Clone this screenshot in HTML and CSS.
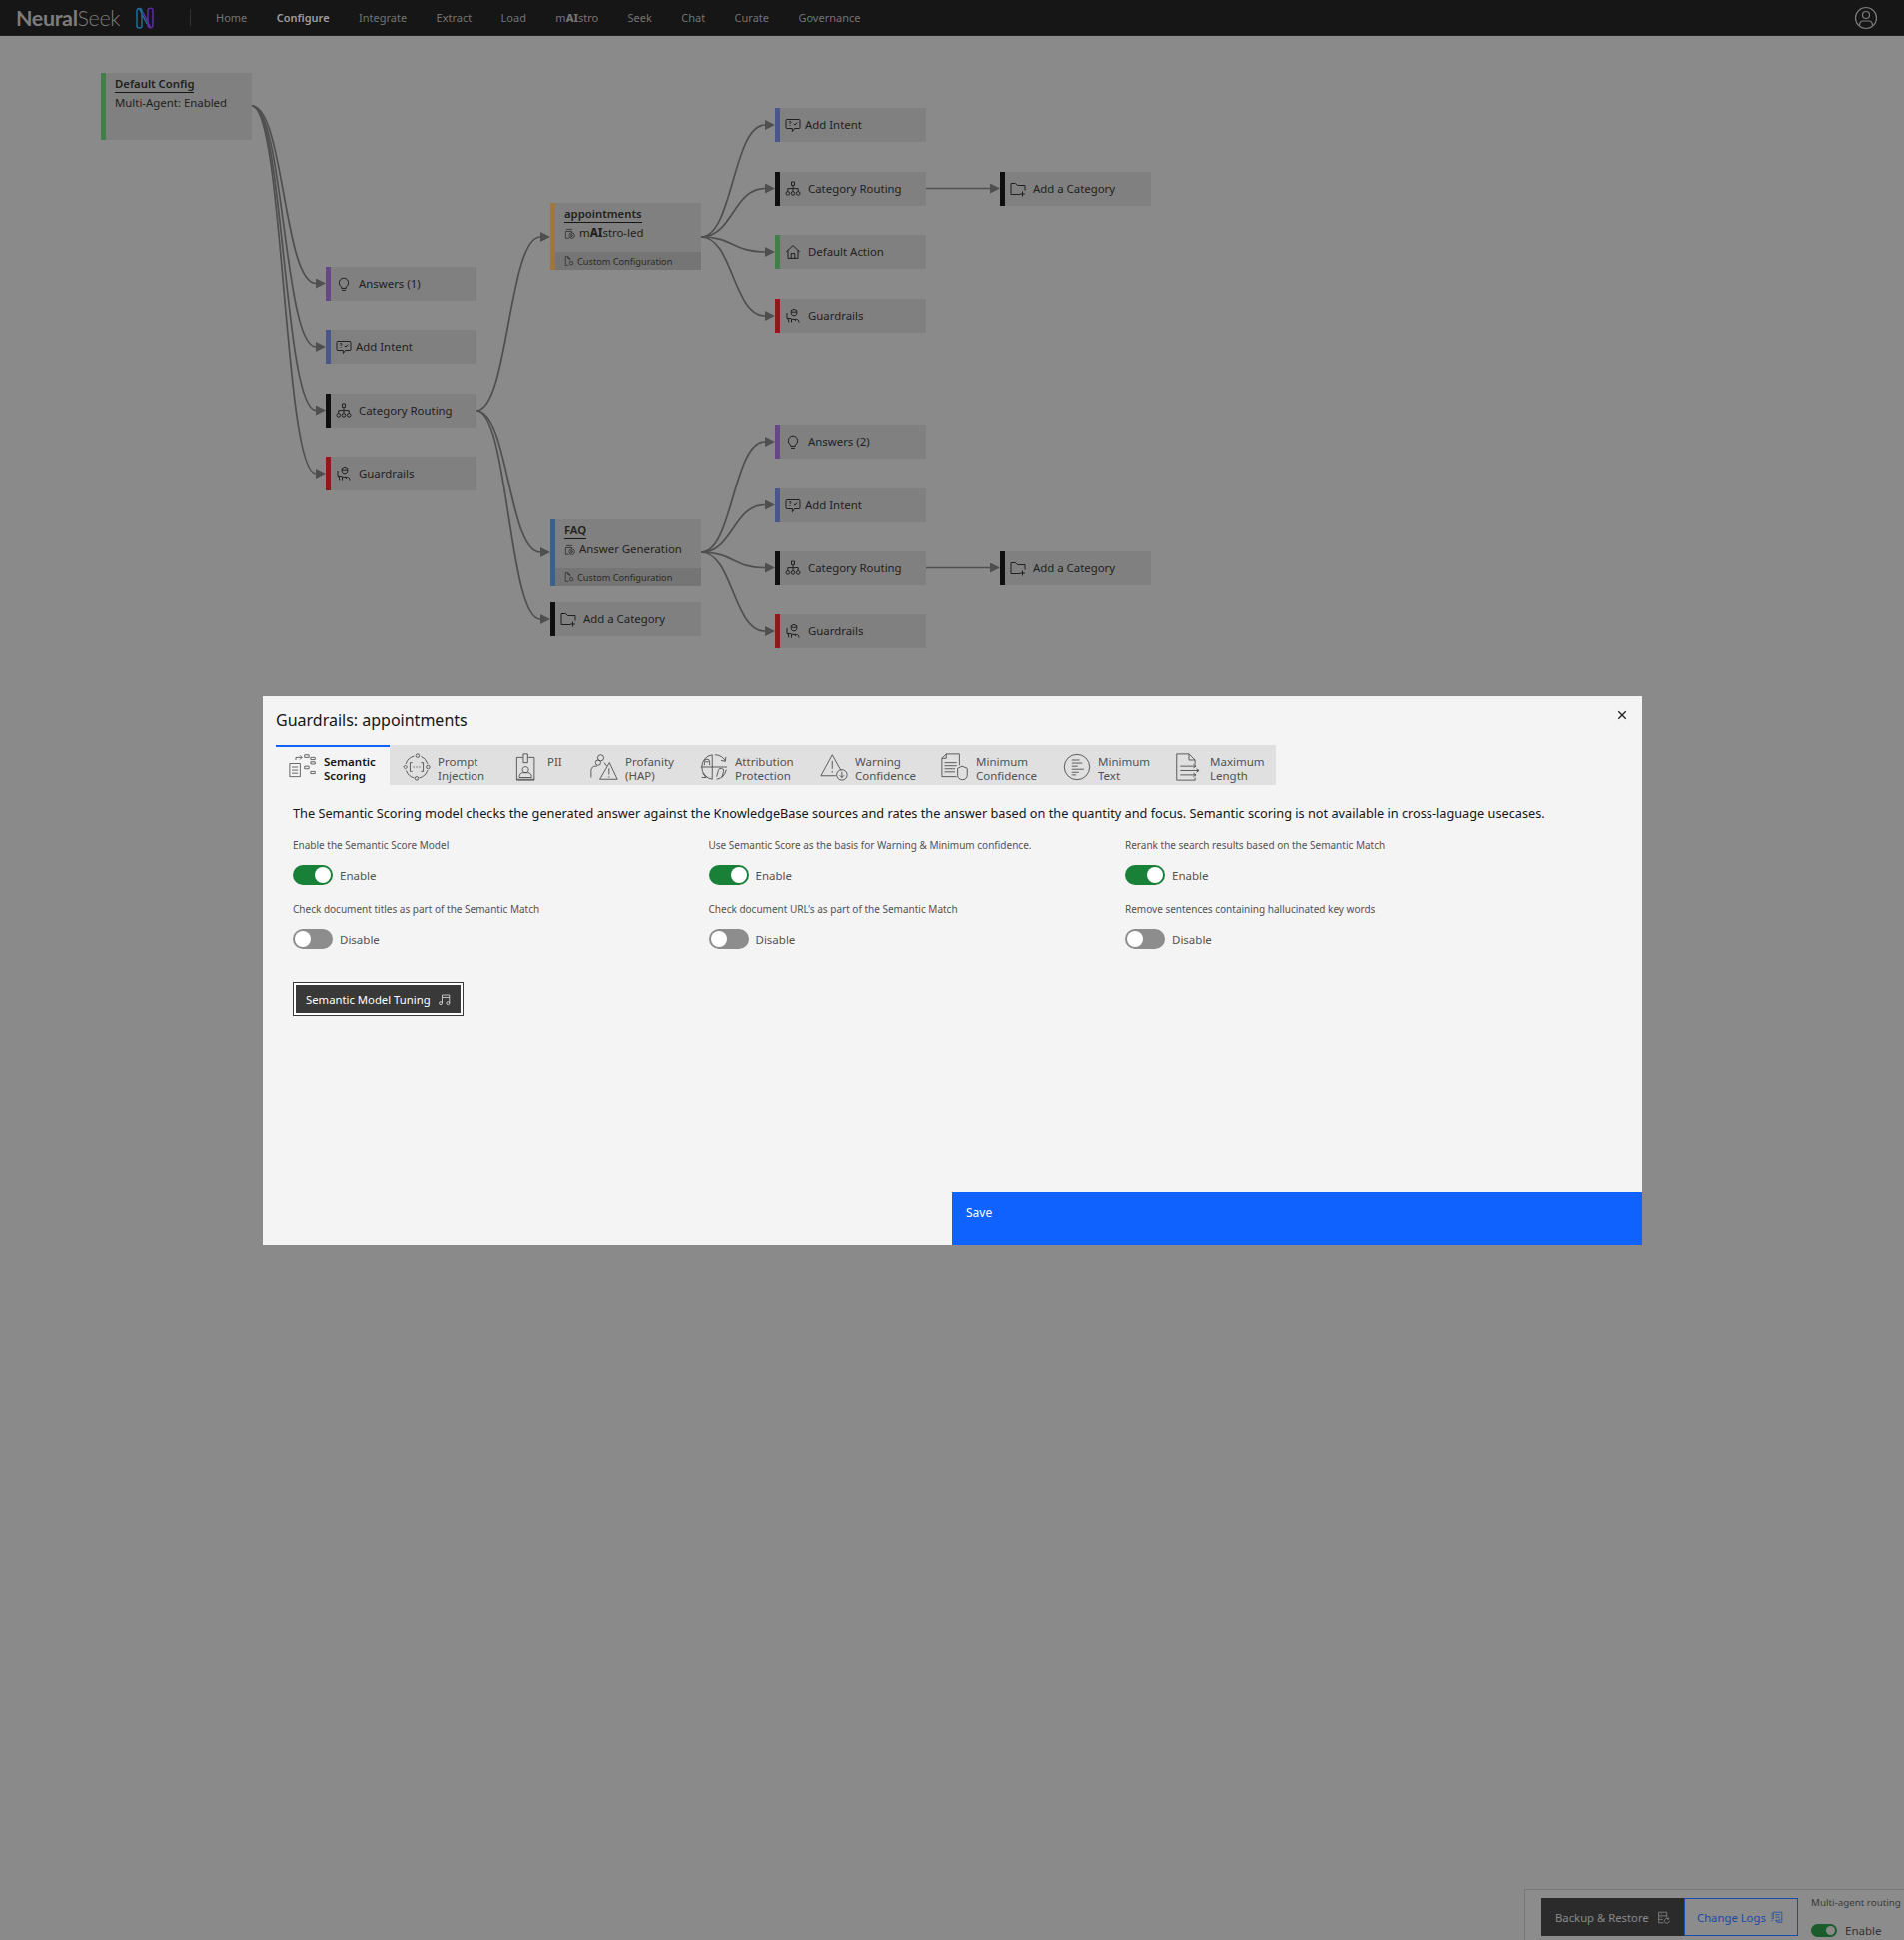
FILE: index.html
```html
<!DOCTYPE html>
<html lang="en">
<head>
    <meta charset="UTF-8">
    <meta name="viewport" content="width=device-width, initial-scale=1.0">
    <title>NeuralSeek - Configure</title>
    <link rel="stylesheet" href="styles.css">
</head>
<body>
    <svg class="sprites" width="0" height="0">
        <symbol id="i-bulb" viewBox="0 0 16 16"><path d="M5.600 11.200C4.200 10 3.400 8.600 3.400 6.800a4.600 4.600 0 0 1 9.200 0c0 1.800-.8 3.200-2.200 4.400v1.200H5.600zM6 14.400h4"/></symbol>
        <symbol id="i-intent" viewBox="0 0 16 16"><path d="M2 2.500h12a1 1 0 0 1 1 1v7a1 1 0 0 1-1 1H9.500L7.400 14.600v-3.100H2a1 1 0 0 1-1-1v-7a1 1 0 0 1 1-1z"/><path d="M4 5.200c.3-1 2-1 2 .1 0 .7-1 .8-1 1.600M5 8.200v.8M8.800 6.800l1.200 1.300 2.200-2.600"/></symbol>
        <symbol id="i-tree" viewBox="0 0 16 16"><path d="M6.500 1h3v3.400h-3zM8 4.400v6M2.800 10.400V7.600h10.400v2.800"/><circle cx="2.800" cy="12.400" r="1.800"/><circle cx="8" cy="12.400" r="1.800"/><circle cx="13.200" cy="12.400" r="1.800"/></symbol>
        <symbol id="i-guard" viewBox="0 0 16 16"><path d="M6.200 2.600 9 1.400l2.800 1.200v2.600c0 1.600-1.200 2.600-2.800 2.600S6.200 6.800 6.200 5.200zM6.200 4.200h5.600M2 5v5.600h4.500M3 10.600 4 14.400M6.500 14.600v-3.200h5c1.500 0 2.500 1 2.500 3.200M9.500 11.400l1.500 1.600"/></symbol>
        <symbol id="i-home" viewBox="0 0 16 16"><path d="M1.200 8 8 1.600 14.800 8M3 6.400v8h10v-8M6.200 14.400V9.600h3.600v4.800"/></symbol>
        <symbol id="i-folder" viewBox="0 0 16 16"><path d="M10 13.500H1V2.500h4.500L7.500 4.500H15v5M12.500 10.500v5M10 13h5"/></symbol>
        <symbol id="i-mode" viewBox="0 0 16 16"><path d="M3 2h9M2 5h9v0M2 5v10h5M11 5v2"/><circle cx="11" cy="11" r="4"/><path d="m10 9.200 2.500 1.800-2.500 1.800z"/></symbol>
        <symbol id="i-custom" viewBox="0 0 16 16"><path d="M7 15H2V1h4l3 3v3"/><path d="M6 1v3h3"/><circle cx="11.500" cy="11.500" r="2.800"/></symbol>
        <symbol id="i-note" viewBox="0 0 16 16"><path d="M5.500 12.500V2.500h9v10M5.500 5.500h9"/><circle cx="3.700" cy="12.500" r="1.800"/><circle cx="12.700" cy="12.500" r="1.800"/></symbol>
        <symbol id="i-backup" viewBox="0 0 16 16"><path d="M8 14.500H2v-13h10v6.500M2 6h10M2 10.500h5M4.500 3.800h1M4.500 8.200h1"/><path d="M15 12a3 3 0 1 1-1-2.200M14.300 8v2h-2"/></symbol>
        <symbol id="i-logs" viewBox="0 0 16 16"><path d="M4 10V1.500h10.500V14H9M6.500 4.500h5.500M6.500 7.500h5.500M1.500 3h2M1.500 6h2M1.500 9h2M1.500 12h2M12 9.500V12H7M8.500 10.300 6.800 12l1.700 1.700"/></symbol>
        <symbol id="i-user" viewBox="0 0 24 24"><circle cx="12" cy="12" r="10.500"/><circle cx="12" cy="9" r="3.500"/><path d="M5.500 19.500c0-3 2-4.500 4-4.500h5c2 0 4 1.500 4 4.500"/></symbol>
        <symbol id="t-semantic" viewBox="0 0 32 32"><path d="M8 8V5h7M12.500 2.500 15 5l-2.500 2.500M18 2h5v3h-5zM25 5h5v2.500h-5zM25 10h5v2.500h-5zM18 15h5v3h-5zM25 21h5v2.500h-5zM1 12h12v15H1zM3.500 16h7M3.500 19.500h7M3.500 23h7"/></symbol>
        <symbol id="t-prompt" viewBox="0 0 32 32"><path d="M21 3.800a13 13 0 0 1 7.400 8.600M28.400 19.600A13 13 0 0 1 19 28.400M13 28.400A13 13 0 0 1 4 20M3.600 12.500A13 13 0 0 1 13 3.600"/><circle cx="17" cy="3" r="2"/><circle cx="29" cy="16" r="2"/><circle cx="16" cy="29" r="2"/><path d="m3 13.800 2.200 2.200L3 18.200.8 16zM11 11H8.500v10H11M21 11h2.500v10H21M12 16h1.500M15.300 16h1.500M18.500 16H20"/></symbol>
        <symbol id="t-pii" viewBox="0 0 32 32"><path d="M12 5H5v26h20V5h-7M12.500 1h5v10h-5zM15 15.500a3.500 3.500 0 1 0 .01 0M8 28v-1c0-3 2-4.500 4.500-4.500h5c2.500 0 4.500 1.500 4.500 4.500v1zM5 30h20"/></symbol>
        <symbol id="t-profanity" viewBox="0 0 32 32"><circle cx="12" cy="5.500" r="3.500"/><circle cx="9" cy="11" r="3"/><path d="M1 28V20c0-3 2-5 5-5h2M16 11l3 4M22 11 31 30H11zM21.500 17.500v7M21.500 26.500v1.500"/></symbol>
        <symbol id="t-attribution" viewBox="0 0 32 32"><path d="M17 2A14 14 0 0 1 29 9M29.500 4.500 29 9.500l-5-1M2 16a14 14 0 0 1 12-14v28A14 14 0 0 1 2 16zM1 16h30M30 19a14 14 0 0 1-11 11M3 23l4 5H2M11 14V10a3 3 0 0 0-6 0v4M6 10h4M19 27l2-7a3 3 0 0 1 6 1l-2 7"/></symbol>
        <symbol id="t-warning" viewBox="0 0 32 32"><path d="M24 20 14 2 1 26h17M14 9v9M14 20.500v2"/><circle cx="25" cy="25" r="6"/><path d="M25 21.500v6.500M22.500 25.500l2.500 2.500 2.500-2.500"/></symbol>
        <symbol id="t-minconf" viewBox="0 0 32 32"><path d="M18 27H1V6l5-5h15v13M6 1v5H1M4 11h14M4 14.500h14M4 18h12M4 21.500h12M19 17.500l5-2.500 6 2.500v8c0 3-2.500 5-5.500 5S19 28.500 19 25.500z"/></symbol>
        <symbol id="t-mintext" viewBox="0 0 32 32"><circle cx="16" cy="16" r="14.500"/><path d="M10 8h9M10 11.500h12M10 15h7M10 18.500h14M10 22h8M10 25h5"/></symbol>
        <symbol id="t-maxlen" viewBox="0 0 32 32"><path d="M23 28v3H2V1h14l7 7v5M16 1v7h7M6 15h18M21 13l3 2-3 2M6 20h21M24.500 18l3 2-3 2M6 25h18M21 23l3 2-3 2"/></symbol>
    </svg>

    <header class="topbar">
        <a class="brand"><b>Neural</b>Seek</a>
        <svg class="brand-mark" viewBox="0 0 20 22" width="20" height="22">
            <path class="mark-a" d="M2 19V4c0-3.500 5-3.500 5 0v15c0 2.500-5 2.500-5 0zM4.500 1.500 12 17"/>
            <path class="mark-b" d="M13 18V3c0-2.500 5-2.500 5 0v15c0 3.500-5 3.500-5 0zM8 5l7.500 15.500"/>
        </svg>
        <span class="bar-divider"></span>
        <nav class="mainnav">
            <a>Home</a>
            <a class="active">Configure</a>
            <a>Integrate</a>
            <a>Extract</a>
            <a>Load</a>
            <a>m<b>AI</b>stro</a>
            <a>Seek</a>
            <a>Chat</a>
            <a>Curate</a>
            <a>Governance</a>
        </nav>
        <svg class="ico user-ico"><use href="#i-user"/></svg>
    </header>

    <section class="canvas">
        <svg class="edges" viewBox="0 36 1906 661" width="1906" height="661">
            <defs>
                <marker id="arrow" markerUnits="userSpaceOnUse" markerWidth="10" markerHeight="10" refX="0" refY="5" orient="auto">
                    <path d="M0 0 10 5 0 10z"/>
                </marker>
            </defs>
            <g class="edge-lines">
                <path d="M252 106C284 106 284 283.500 316 283.500"/>
                <path d="M252 106C284 106 284 347 316 347"/>
                <path d="M252 106C284 106 284 410.500 316 410.500"/>
                <path d="M252 106C284 106 284 474 316 474"/>
                <path d="M477 411C509 411 509 237 541 237"/>
                <path d="M477 411C509 411 509 553 541 553"/>
                <path d="M477 411C509 411 509 620 541 620"/>
                <path d="M702 237C734 237 734 125 766 125"/>
                <path d="M702 237C734 237 734 188.500 766 188.500"/>
                <path d="M702 237C734 237 734 252 766 252"/>
                <path d="M702 237C734 237 734 316 766 316"/>
                <path d="M926 188.500H991"/>
                <path d="M702 553C734 553 734 442 766 442"/>
                <path d="M702 553C734 553 734 505.500 766 505.500"/>
                <path d="M702 553C734 553 734 568.500 766 568.500"/>
                <path d="M702 553C734 553 734 632 766 632"/>
                <path d="M926 568.500H991"/>
            </g>
        </svg>

        <div class="node node-big bar-green n-default">
            <div class="node-title">Default Config</div>
            <div class="node-sub">Multi-Agent: Enabled</div>
        </div>

        <div class="node bar-purple n-c1r1"><svg class="ico"><use href="#i-bulb"/></svg><span>Answers (1)</span></div>
        <div class="node node-tight bar-slate n-c1r2"><svg class="ico"><use href="#i-intent"/></svg><span>Add Intent</span></div>
        <div class="node bar-black n-c1r3"><svg class="ico"><use href="#i-tree"/></svg><span>Category Routing</span></div>
        <div class="node bar-red n-c1r4"><svg class="ico"><use href="#i-guard"/></svg><span>Guardrails</span></div>

        <div class="node node-big bar-orange n-appointments">
            <div class="node-title">appointments</div>
            <div class="node-sub"><svg class="ico ico-sm"><use href="#i-mode"/></svg>m<b>AI</b>stro-led</div>
            <div class="node-foot"><svg class="ico ico-xs"><use href="#i-custom"/></svg>Custom Configuration</div>
        </div>
        <div class="node node-big bar-blue n-faq">
            <div class="node-title">FAQ</div>
            <div class="node-sub"><svg class="ico ico-sm"><use href="#i-mode"/></svg>Answer Generation</div>
            <div class="node-foot"><svg class="ico ico-xs"><use href="#i-custom"/></svg>Custom Configuration</div>
        </div>
        <div class="node bar-black n-addcat"><svg class="ico"><use href="#i-folder"/></svg><span>Add a Category</span></div>

        <div class="node node-tight bar-slate n-c3r1"><svg class="ico"><use href="#i-intent"/></svg><span>Add Intent</span></div>
        <div class="node bar-black n-c3r2"><svg class="ico"><use href="#i-tree"/></svg><span>Category Routing</span></div>
        <div class="node bar-green n-c3r3"><svg class="ico"><use href="#i-home"/></svg><span>Default Action</span></div>
        <div class="node bar-red n-c3r4"><svg class="ico"><use href="#i-guard"/></svg><span>Guardrails</span></div>
        <div class="node bar-purple n-c3r5"><svg class="ico"><use href="#i-bulb"/></svg><span>Answers (2)</span></div>
        <div class="node node-tight bar-slate n-c3r6"><svg class="ico"><use href="#i-intent"/></svg><span>Add Intent</span></div>
        <div class="node bar-black n-c3r7"><svg class="ico"><use href="#i-tree"/></svg><span>Category Routing</span></div>
        <div class="node bar-red n-c3r8"><svg class="ico"><use href="#i-guard"/></svg><span>Guardrails</span></div>

        <div class="node bar-black n-c4r1"><svg class="ico"><use href="#i-folder"/></svg><span>Add a Category</span></div>
        <div class="node bar-black n-c4r2"><svg class="ico"><use href="#i-folder"/></svg><span>Add a Category</span></div>
    </section>

    <section class="modal">
        <div class="modal-head">
            <h2>Guardrails: appointments</h2>
            <svg class="close-ico" viewBox="0 0 12 12" width="10" height="10"><path d="M1.500 1.500l9 9M10.500 1.500l-9 9"/></svg>
        </div>

        <div class="tabs">
            <div class="tab tab-semantic selected"><svg class="tab-ico"><use href="#t-semantic"/></svg><span>Semantic<br>Scoring</span></div>
            <div class="tab tab-prompt"><svg class="tab-ico"><use href="#t-prompt"/></svg><span>Prompt<br>Injection</span></div>
            <div class="tab tab-pii"><svg class="tab-ico"><use href="#t-pii"/></svg><span>PII<br>&nbsp;</span></div>
            <div class="tab tab-profanity"><svg class="tab-ico"><use href="#t-profanity"/></svg><span>Profanity<br>(HAP)</span></div>
            <div class="tab tab-attribution"><svg class="tab-ico"><use href="#t-attribution"/></svg><span>Attribution<br>Protection</span></div>
            <div class="tab tab-warning"><svg class="tab-ico"><use href="#t-warning"/></svg><span>Warning<br>Confidence</span></div>
            <div class="tab tab-minconf"><svg class="tab-ico"><use href="#t-minconf"/></svg><span>Minimum<br>Confidence</span></div>
            <div class="tab tab-mintext"><svg class="tab-ico"><use href="#t-mintext"/></svg><span>Minimum<br>Text</span></div>
            <div class="tab tab-maxlen"><svg class="tab-ico"><use href="#t-maxlen"/></svg><span>Maximum<br>Length</span></div>
        </div>

        <div class="tab-body">
            <p class="intro">The Semantic Scoring model checks the generated answer against the KnowledgeBase sources and rates the answer based on the quantity and focus. Semantic scoring is not available in cross-laguage usecases.</p>

            <div class="options">
                <div class="option">
                    <label>Enable the Semantic Score Model</label>
                    <div class="toggle-row"><span class="toggle on"></span>Enable</div>
                </div>
                <div class="option">
                    <label>Use Semantic Score as the basis for Warning &amp; Minimum confidence.</label>
                    <div class="toggle-row"><span class="toggle on"></span>Enable</div>
                </div>
                <div class="option">
                    <label>Rerank the search results based on the Semantic Match</label>
                    <div class="toggle-row"><span class="toggle on"></span>Enable</div>
                </div>
                <div class="option">
                    <label>Check document titles as part of the Semantic Match</label>
                    <div class="toggle-row"><span class="toggle"></span>Disable</div>
                </div>
                <div class="option">
                    <label>Check document URL's as part of the Semantic Match</label>
                    <div class="toggle-row"><span class="toggle"></span>Disable</div>
                </div>
                <div class="option">
                    <label>Remove sentences containing hallucinated key words</label>
                    <div class="toggle-row"><span class="toggle"></span>Disable</div>
                </div>
            </div>

            <button class="tuning-btn">Semantic Model Tuning<svg class="ico ico-btn"><use href="#i-note"/></svg></button>
        </div>

        <div class="modal-foot">
            <button class="save-btn">Save</button>
        </div>
    </section>

    <aside class="dock">
        <button class="dock-btn dock-dark">Backup &amp; Restore<svg class="ico"><use href="#i-backup"/></svg></button>
        <button class="dock-btn dock-outline">Change Logs<svg class="ico"><use href="#i-logs"/></svg></button>
        <div class="dock-toggle">
            <label>Multi-agent routing</label>
            <div class="dock-row"><span class="toggle-mini"></span>Enable</div>
        </div>
    </aside>
</body>
</html>
```

FILE: styles.css
```css
* { box-sizing: border-box; }
html, body { margin: 0; padding: 0; }
body { position: relative; width: 1906px; height: 1942px; overflow: hidden; background: #8a8a8a; font-family: "Noto Sans", Arial, sans-serif; color: #161616; }
.sprites { position: absolute; }
.ico { width: 16px; height: 16px; flex: none; fill: none; stroke: #1f1f1f; stroke-width: 1; }

/* top bar */
.topbar { display: flex; align-items: center; height: 36px; background: #161616; border-bottom: 1px solid #222; }
.brand { flex: none; margin-left: 16px; width: 104px; font-size: 21.5px; letter-spacing: -0.4px; color: #7c7c7c; font-family: "Lato", sans-serif; font-weight: 300; }
.brand b { font-weight: 700; }
.brand-mark { flex: none; margin-left: 15px; fill: none; stroke-width: 1.5; }
.mark-a { stroke: #1f6d96; }
.mark-b { stroke: #5b2fa3; }
.bar-divider { width: 1px; height: 17px; margin-left: 35px; background: #333; }
.mainnav { display: flex; gap: 29.4px; margin-left: 25px; margin-top: -1px; font-size: 11px; color: #747474; }
.mainnav .active { color: #9e9e9e; font-weight: 600; }
.mainnav b { font-weight: 800; }
.user-ico { width: 24px; height: 24px; margin-left: auto; margin-right: 26px; stroke: #7c7c7c; stroke-width: 1.2; }

/* diagram */
.canvas { position: relative; height: 661px; }
.edges { position: absolute; left: 0; top: 0; }
.edge-lines path { fill: none; stroke: #4f4f4f; stroke-width: 1.7; marker-end: url(#arrow); }
marker path { fill: #4f4f4f; stroke: none; }

.node { position: absolute; display: flex; align-items: center; width: 151px; height: 34px; padding-left: 5px; background: #808080; border-left: 5px solid #111; font-size: 11.4px; color: #202020; }
.node span { margin-bottom: 2px; }
.node .ico { margin-right: 7px; }
.node-tight .ico { margin-right: 4px; }
.node-big { display: block; height: 67px; padding-left: 9px; padding-top: 3px; }
.node-title { display: table; font-size: 11.3px; font-weight: 600; line-height: 16px; border-bottom: 1px solid #161616; }
.node-sub { display: flex; align-items: center; margin-top: 1px; font-size: 11.4px; line-height: 18px; white-space: nowrap; }
.node-sub b { font-weight: 800; }
.node-big .ico-sm { width: 11px; height: 13px; margin-right: 4px; }
.node-foot { position: absolute; left: 0; right: 0; bottom: 0; display: flex; align-items: center; height: 18px; padding-left: 9px; background: #757575; font-size: 9.2px; color: #2a2a2a; white-space: nowrap; }
.node-big .ico-xs { width: 10px; height: 12px; margin-right: 3px; }

.bar-green { border-left-color: #437d49; }
.bar-purple { border-left-color: #664886; }
.bar-slate { border-left-color: #4b578a; }
.bar-black { border-left-color: #0f0f0f; }
.bar-red { border-left-color: #8c1c1c; }
.bar-orange { border-left-color: #a0763a; }
.bar-blue { border-left-color: #38628e; }

.n-default { left: 101px; top: 37px; }
.n-c1r1 { left: 326px; top: 231px; }
.n-c1r2 { left: 326px; top: 294px; }
.n-c1r3 { left: 326px; top: 358px; }
.n-c1r4 { left: 326px; top: 421px; }
.n-appointments { left: 551px; top: 167px; }
.n-faq { left: 551px; top: 484px; }
.n-addcat { left: 551px; top: 567px; }
.n-c3r1 { left: 776px; top: 72px; }
.n-c3r2 { left: 776px; top: 136px; }
.n-c3r3 { left: 776px; top: 199px; }
.n-c3r4 { left: 776px; top: 263px; }
.n-c3r5 { left: 776px; top: 389px; }
.n-c3r6 { left: 776px; top: 453px; }
.n-c3r7 { left: 776px; top: 516px; }
.n-c3r8 { left: 776px; top: 579px; }
.n-c4r1 { left: 1001px; top: 136px; }
.n-c4r2 { left: 1001px; top: 516px; }

/* modal */
.modal { position: relative; display: flex; flex-direction: column; width: 1381px; height: 549px; margin-left: 263px; background: #f4f4f4; }
.modal-head { display: flex; align-items: center; justify-content: space-between; height: 49px; padding: 0 15px 0 13px; }
.modal-head h2 { margin: 0 0 2px; font-size: 16px; font-weight: 400; color: #161616; }
.close-ico { margin-bottom: 12px; fill: none; stroke: #161616; stroke-width: 1.4; }

.tabs { display: flex; height: 40px; margin-left: 13px; width: 1001px; background: #e0e0e0; }
.tab { display: flex; align-items: flex-start; padding: 10px 0 0 13px; font-size: 11.5px; line-height: 14px; color: #525252; }
.tab span { white-space: nowrap; }
.tab.selected { background: #f4f4f4; border-top: 2px solid #0f62fe; padding-top: 8px; font-weight: 600; color: #161616; }
.tab-ico { width: 28px; height: 28px; flex: none; margin-top: -2px; margin-right: 7px; fill: none; stroke: #4a4a4a; stroke-width: 1; }
.tab.selected .tab-ico { stroke: #525252; }
.tab-semantic { width: 114px; }
.tab-prompt { width: 113px; }
.tab-pii { width: 75px; padding-left: 10px; }
.tab-profanity { width: 110px; }
.tab-attribution { width: 120px; }
.tab-warning { width: 121px; }
.tab-minconf { width: 122px; }
.tab-mintext { width: 112px; }
.tab-maxlen { width: 114px; }

.tab-body { flex: 1; padding: 0 29px 0 30px; }
.intro { margin: 19px 0 0; font-size: 12.73px; line-height: 18px; color: #161616; white-space: nowrap; }
.options { display: grid; grid-template-columns: repeat(3, 416.5px); margin-top: 15px; }
.option { height: 64px; }
.option label { display: block; font-size: 10px; line-height: 16px; color: #525252; }
.toggle-row { display: flex; align-items: center; margin-top: 12px; font-size: 11.5px; color: #525252; }
.toggle { position: relative; display: inline-block; width: 40px; height: 20px; margin-right: 7px; border-radius: 10px; background: #8d8d8d; }
.toggle::after { content: ""; position: absolute; left: 2px; top: 2px; width: 16px; height: 16px; border-radius: 50%; background: #fff; }
.toggle.on { background: #198038; }
.toggle.on::after { left: 22px; }

.tuning-btn { display: flex; align-items: center; width: 171px; height: 34px; margin-top: 17px; padding: 0 0 0 12px; background: #393939; border: 1px solid #393939; box-shadow: inset 0 0 0 2px #fff; color: #fff; font: 11.3px "Noto Sans", sans-serif; white-space: nowrap; }
.ico-btn { width: 13px; height: 13px; margin-left: 7px; stroke: #e0e0e0; }

.modal-foot { display: flex; justify-content: flex-end; }
.save-btn { display: flex; align-items: flex-start; width: 691px; height: 53px; padding: 13px 14px; background: #0f62fe; border: none; color: #fff; font: 12px/16px "Noto Sans", sans-serif; }

/* bottom right dock */
.dock { position: absolute; right: 0; bottom: 0; left: 1526px; top: 1891px; display: flex; align-items: flex-start; padding: 8px 0 0 16px; border: 1px solid #767676; border-right: none; border-bottom: none; background: #8c8c8c; overflow: hidden; }
.dock-btn { flex: none; display: flex; align-items: center; justify-content: space-between; height: 38px; white-space: nowrap; }
.dock-dark { width: 143px; padding: 0 14px; background: #2b2b2b; border: none; color: #8a8a8a; font: 11.3px "Noto Sans", sans-serif; }
.dock-dark .ico { stroke: #8a8a8a; width: 13px; height: 13px; }
.dock-outline { width: 114px; padding: 0 14px 0 12px; background: transparent; border: 1px solid #1c4aa8; color: #1c4aa8; font: 11.3px "Noto Sans", sans-serif; }
.dock-outline .ico { stroke: #1c4aa8; width: 13px; height: 13px; }
.dock-toggle { flex: none; margin-left: 13px; width: 93px; white-space: nowrap; font-size: 11.5px; color: #333; }
.dock-toggle label { display: block; margin-top: -2px; font-size: 9.8px; line-height: 14px; color: #3a3a3a; }
.dock-row { display: flex; align-items: center; margin-top: 13px; color: #333; }
.toggle-mini { position: relative; width: 26px; height: 13px; margin-right: 8px; border-radius: 7px; background: #1a5c2c; }
.toggle-mini::after { content: ""; position: absolute; right: 2px; top: 2px; width: 9px; height: 9px; border-radius: 50%; background: #8a8a8a; }
```
